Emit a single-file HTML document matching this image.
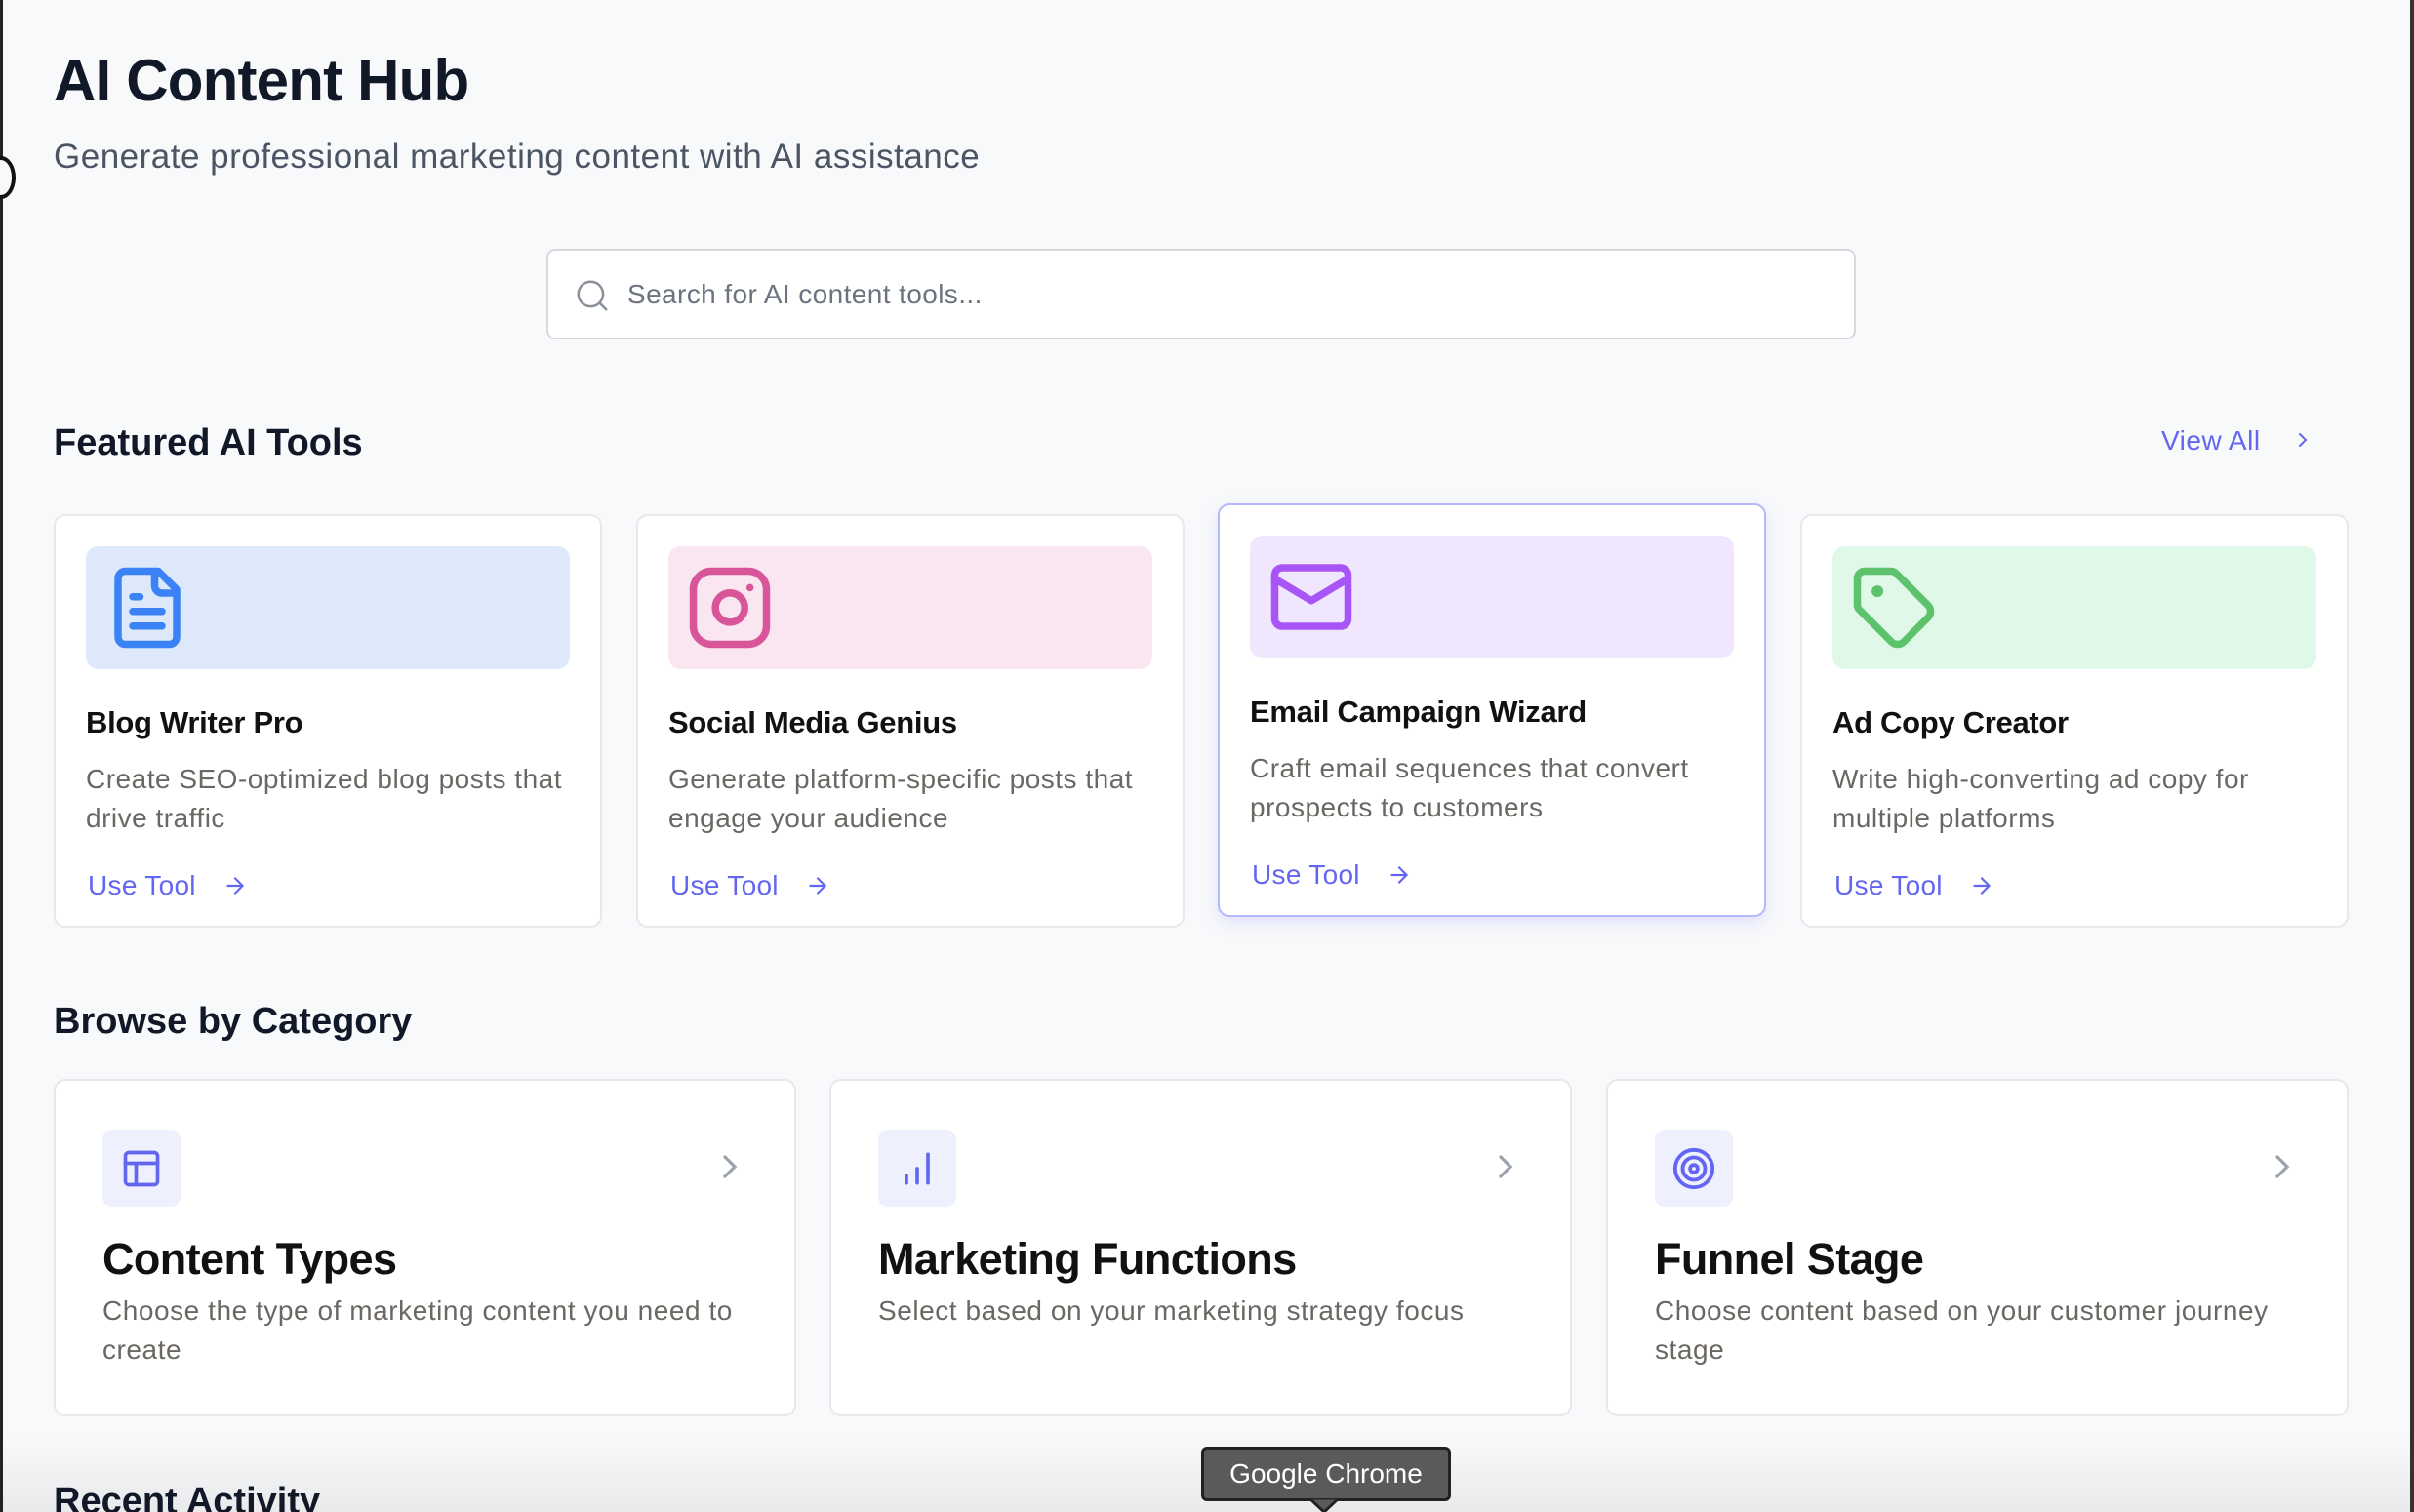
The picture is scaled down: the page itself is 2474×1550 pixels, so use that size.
<!DOCTYPE html>
<html><head><meta charset="utf-8"><style>
*{box-sizing:border-box;margin:0;padding:0}
html,body{width:2474px;height:1550px;overflow:hidden}
body{background:#f8f9fb;font-family:"Liberation Sans",sans-serif;position:relative;color:#111827}
.edgeL{position:absolute;left:0;top:0;width:3px;height:1550px;background:#222}
.edgeR{position:absolute;right:0;top:0;width:4px;height:1550px;background:#333}
.knob{position:absolute;left:-14px;top:160px;width:30px;height:44px;border:4px solid #111;border-radius:50%;background:#f8f9fb}
h1{position:absolute;left:55px;top:48px;font-size:60px;font-weight:700;color:#111827;letter-spacing:-0.8px}
.sub{position:absolute;left:55px;top:141px;font-size:35px;color:#4b5563;letter-spacing:0.5px}
.search{position:absolute;left:560px;top:255px;width:1342px;height:93px;background:#fff;border:2px solid #d6d9de;border-radius:9px}
.search svg{position:absolute;left:26px;top:27px}
.search span{position:absolute;left:81px;top:29px;font-size:28px;color:#6b7280;letter-spacing:0.4px}
h2{position:absolute;font-size:38px;font-weight:700;color:#111827}
.va{position:absolute;left:2215px;top:436px;font-size:28px;color:#6366f1;letter-spacing:0.5px}
.va svg{position:absolute;left:133px;top:3px}
.card{position:absolute;width:562px;height:424px;background:#fff;border:2px solid #e6e8ec;border-radius:12px;padding:31px}
.card.hov{border-color:#b4b8fb;box-shadow:0 6px 16px rgba(99,102,241,.15)}
.ib{height:126px;border-radius:13px;padding:18px}
.card h3{margin-top:37px;font-size:31px;font-weight:700;color:#111;letter-spacing:-0.3px}
.card p{margin-top:20px;font-size:28px;line-height:40px;color:#6b6763;letter-spacing:0.5px}
.ut{position:absolute;left:33px;top:363px;font-size:28px;color:#6366f1;letter-spacing:0.3px}
.ut svg{position:absolute;left:138px;top:3px}
.cc{position:absolute;top:1106px;width:761px;height:346px;background:#fff;border:2px solid #e6e8ec;border-radius:12px}
.cc .ic{position:absolute;left:48px;top:50px;width:80px;height:79px;border-radius:10px;background:#eef0fe;display:flex;align-items:center;justify-content:center}
.cc .ch{position:absolute;right:46px;top:68px}
.cc h3{position:absolute;left:48px;top:157px;font-size:45px;font-weight:700;color:#111;letter-spacing:-0.6px}
.cc p{position:absolute;left:48px;top:216px;right:50px;font-size:28px;line-height:40px;color:#6b6763;letter-spacing:0.55px}
.tip{position:absolute;left:1231px;top:1483px;width:256px;height:56px;background:#5a5a5a;border:3px solid #222;border-radius:6px;color:#fff;font-size:28px;text-align:center;line-height:50px}
.fade{position:absolute;left:0;top:1470px;width:2474px;height:80px;background:linear-gradient(#f8f9fb00,#e9eaec)}
</style></head><body>
<div class="fade"></div>
<h1>AI Content Hub</h1>
<div class="sub">Generate professional marketing content with AI assistance</div>
<div class="search"><svg width="38" height="38" viewBox="0 0 24 24" fill="none" stroke="#8b919b" stroke-width="1.6" stroke-linecap="round"><circle cx="11" cy="11" r="8"/><path d="M21 21l-4.3-4.3"/></svg><span>Search for AI content tools...</span></div>
<h2 style="left:55px;top:433px">Featured AI Tools</h2>
<div class="va">View All<svg width="24" height="24" viewBox="0 0 24 24" fill="none" stroke="#6366f1" stroke-width="2" stroke-linecap="round"><path d="M9 6l6 6-6 6"/></svg></div>

<div class="card" style="left:55px;top:527px"><div class="ib" style="background:#dde8fb"><svg width="90" height="90" viewBox="0 0 24 24" fill="none" stroke="#3b82f6" stroke-width="2" stroke-linecap="round" stroke-linejoin="round"><path d="M15 2H6a2 2 0 0 0-2 2v16a2 2 0 0 0 2 2h12a2 2 0 0 0 2-2V7z"/><path d="M14 2v4a2 2 0 0 0 2 2h4"/><path d="M10 9H8M16 13H8M16 17H8"/></svg></div><h3>Blog Writer Pro</h3><p>Create SEO-optimized blog posts that drive traffic</p><div class="ut">Use Tool<svg width="26" height="26" viewBox="0 0 24 24" fill="none" stroke="#6366f1" stroke-width="2" stroke-linecap="round"><path d="M5 12h14M12 5l7 7-7 7"/></svg></div></div>

<div class="card" style="left:652px;top:527px"><div class="ib" style="background:#f9e6f0"><svg width="90" height="90" viewBox="0 0 24 24" fill="none" stroke="#d9559a" stroke-width="2" stroke-linecap="round" stroke-linejoin="round"><rect x="2" y="2" width="20" height="20" rx="5"/><path d="M16 11.37A4 4 0 1 1 12.63 8 4 4 0 0 1 16 11.37z"/><path d="M17.5 6.5h.01"/></svg></div><h3>Social Media Genius</h3><p>Generate platform-specific posts that engage your audience</p><div class="ut">Use Tool<svg width="26" height="26" viewBox="0 0 24 24" fill="none" stroke="#6366f1" stroke-width="2" stroke-linecap="round"><path d="M5 12h14M12 5l7 7-7 7"/></svg></div></div>

<div class="card hov" style="left:1248px;top:516px"><div class="ib" style="background:#f0e6fd"><svg width="90" height="90" viewBox="0 0 24 24" fill="none" stroke="#a855f7" stroke-width="2" stroke-linecap="round" stroke-linejoin="round"><rect x="2" y="4" width="20" height="16" rx="2"/><path d="M22 7l-10 6L2 7"/></svg></div><h3>Email Campaign Wizard</h3><p>Craft email sequences that convert prospects to customers</p><div class="ut">Use Tool<svg width="26" height="26" viewBox="0 0 24 24" fill="none" stroke="#6366f1" stroke-width="2" stroke-linecap="round"><path d="M5 12h14M12 5l7 7-7 7"/></svg></div></div>

<div class="card" style="left:1845px;top:527px"><div class="ib" style="background:#e0f8e7"><svg width="90" height="90" viewBox="0 0 24 24" fill="none" stroke="#5cc26b" stroke-width="2" stroke-linecap="round" stroke-linejoin="round"><path d="M12.6 2.6A2 2 0 0 0 11.2 2H4a2 2 0 0 0-2 2v7.2a2 2 0 0 0 .6 1.4l8.7 8.7a2.4 2.4 0 0 0 3.4 0l6.6-6.6a2.4 2.4 0 0 0 0-3.4z"/><circle cx="7.5" cy="7.5" r=".6" fill="#5cc26b"/></svg></div><h3>Ad Copy Creator</h3><p>Write high-converting ad copy for multiple platforms</p><div class="ut">Use Tool<svg width="26" height="26" viewBox="0 0 24 24" fill="none" stroke="#6366f1" stroke-width="2" stroke-linecap="round"><path d="M5 12h14M12 5l7 7-7 7"/></svg></div></div>

<h2 style="left:55px;top:1026px">Browse by Category</h2>

<div class="cc" style="left:55px"><div class="ic"><svg width="44" height="44" viewBox="0 0 24 24" fill="none" stroke="#6366f1" stroke-width="2" stroke-linecap="round"><rect x="3" y="3" width="18" height="18" rx="2"/><path d="M3 9h18M9 21V9"/></svg></div><svg class="ch" width="40" height="40" viewBox="0 0 24 24" fill="none" stroke="#9ca3af" stroke-width="2" stroke-linecap="round"><path d="M9 6l6 6-6 6"/></svg><h3>Content Types</h3><p>Choose the type of marketing content you need to create</p></div>

<div class="cc" style="left:850px"><div class="ic"><svg width="44" height="44" viewBox="0 0 24 24" fill="none" stroke="#6366f1" stroke-width="2" stroke-linecap="round"><path d="M6 20v-4M12 20v-8M18 20V4"/></svg></div><svg class="ch" width="40" height="40" viewBox="0 0 24 24" fill="none" stroke="#9ca3af" stroke-width="2" stroke-linecap="round"><path d="M9 6l6 6-6 6"/></svg><h3>Marketing Functions</h3><p>Select based on your marketing strategy focus</p></div>

<div class="cc" style="left:1646px"><div class="ic"><svg width="46" height="46" viewBox="0 0 24 24" fill="none" stroke="#6366f1" stroke-width="2"><circle cx="12" cy="12" r="10"/><circle cx="12" cy="12" r="6"/><circle cx="12" cy="12" r="2"/></svg></div><svg class="ch" width="40" height="40" viewBox="0 0 24 24" fill="none" stroke="#9ca3af" stroke-width="2" stroke-linecap="round"><path d="M9 6l6 6-6 6"/></svg><h3>Funnel Stage</h3><p>Choose content based on your customer journey stage</p></div>

<h2 style="left:55px;top:1518px">Recent Activity</h2>
<div class="tip">Google Chrome</div>
<svg style="position:absolute;left:1342px;top:1536px" width="30" height="16" viewBox="0 0 30 16"><path d="M0 0L15 14L30 0Z" fill="#5a5a5a" stroke="#222" stroke-width="3"/></svg>
<div class="edgeL"></div><div class="edgeR"></div><div class="knob"></div>
</body></html>
